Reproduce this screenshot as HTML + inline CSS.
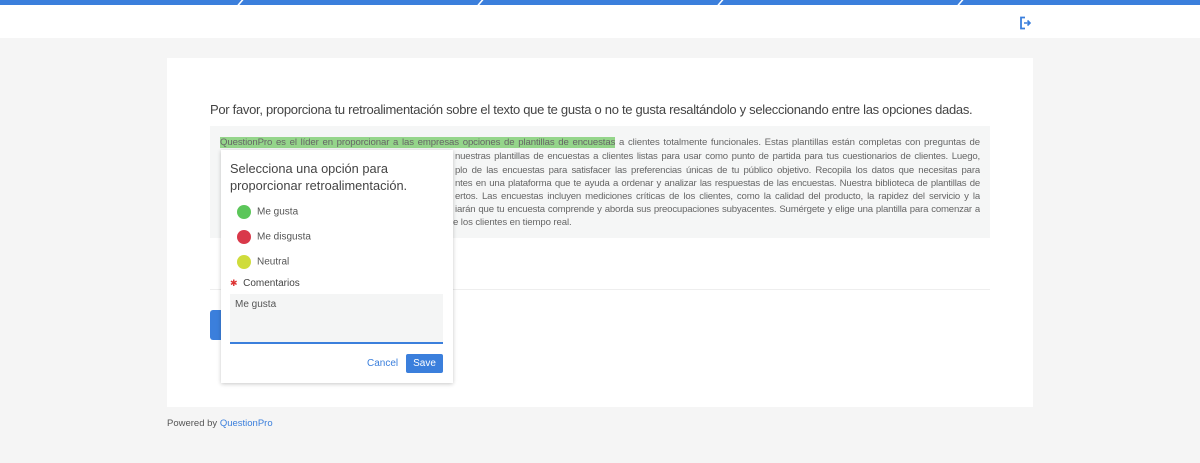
<!DOCTYPE html>
<html><head><meta charset="utf-8"><style>
*{margin:0;padding:0;box-sizing:border-box}
body{width:1200px;height:463px;background:#f5f5f5;font-family:"Liberation Sans",sans-serif;position:relative;overflow:hidden;color:#555}
.top{position:absolute;left:0;top:0;width:1200px;height:5px;background:#3b7fdc}
.sep{position:absolute;top:0;width:2px;height:6px;background:#fff;transform:skewX(-40deg)}
.hdr{position:absolute;left:0;top:5px;width:1200px;height:33px;background:#fff}
.card{position:absolute;left:167px;top:58px;width:866px;height:349px;background:#fff}
.h{position:absolute;left:210px;top:102px;font-size:13px;letter-spacing:-0.3px;color:#444;white-space:nowrap}
.box{position:absolute;left:210px;top:126px;width:780px;height:112px;background:#f5f6f6}
.ln{position:absolute;font-size:9.6px;letter-spacing:-0.1px;color:#666;white-space:nowrap;line-height:13px}
.j{text-align:justify;text-align-last:justify;white-space:normal;height:13px;overflow:hidden}
.t{letter-spacing:-0.18px}
.hl{background:#94d58a}
.pop{position:absolute;left:221px;top:150px;width:232px;height:233px;background:#fff;box-shadow:0 1px 4px rgba(0,0,0,.22)}
.pt{position:absolute;left:9px;top:10px;font-size:12.8px;line-height:17px;color:#444}
.opt{position:absolute;left:16px;font-size:10px;color:#555}
.dot{display:inline-block;width:14px;height:14px;border-radius:50%;vertical-align:middle;margin-right:6px}
.ta{position:absolute;left:9px;top:144px;width:213px;height:50px;background:#f4f5f5;border-bottom:2px solid #3b7fdc;font-size:10px;color:#555;padding:5px}
</style></head><body>
<div class="top"></div>
<div class="sep" style="left:239px"></div><div class="sep" style="left:479px"></div><div class="sep" style="left:719px"></div><div class="sep" style="left:959px"></div>
<div class="hdr"></div>
<svg style="position:absolute;left:1019px;top:16px" width="13" height="14" viewBox="0 0 13 14"><path d="M6 1.5H2v11h4" fill="none" stroke="#3b7fdc" stroke-width="1.8"/><path d="M5 7h6M8.5 4.5L11 7 8.5 9.5" fill="none" stroke="#3b7fdc" stroke-width="1.6"/></svg>
<div class="card"></div>
<div class="h">Por favor, proporciona tu retroalimentación sobre el texto que te gusta o no te gusta resaltándolo y seleccionando entre las opciones dadas.</div>
<div class="box"></div>
<div class="ln j" style="left:220px;top:136px;width:760px"><span class="hl">QuestionPro es el líder en proporcionar a las empresas opciones de plantillas de encuestas</span> a clientes totalmente funcionales. Estas plantillas están completas con preguntas de</div>
<div class="ln j t" style="left:455px;top:150px;width:525px">nuestras plantillas de encuestas a clientes listas para usar como punto de partida para tus cuestionarios de clientes. Luego,</div>
<div class="ln j t" style="left:455px;top:164px;width:525px">plo de las encuestas para satisfacer las preferencias únicas de tu público objetivo. Recopila los datos que necesitas para</div>
<div class="ln j t" style="left:455px;top:177px;width:525px">ntes en una plataforma que te ayuda a ordenar y analizar las respuestas de las encuestas. Nuestra biblioteca de plantillas de</div>
<div class="ln j t" style="left:455px;top:190px;width:525px">ertos. Las encuestas incluyen mediciones críticas de los clientes, como la calidad del producto, la rapidez del servicio y la</div>
<div class="ln j t" style="left:455px;top:203px;width:525px">iarán que tu encuesta comprende y aborda sus preocupaciones subyacentes. Sumérgete y elige una plantilla para comenzar a</div>
<div class="ln" style="left:453px;top:216px">e los clientes en tiempo real.</div>
<div style="position:absolute;left:210px;top:289px;width:780px;height:1px;background:#eee"></div>
<div style="position:absolute;left:210px;top:310px;width:30px;height:30px;background:#3b7fdc;border-radius:3px"></div>
<div class="pop">
<div class="pt">Selecciona una opción para<br>proporcionar retroalimentación.</div>
<div class="opt" style="top:55px"><span class="dot" style="background:#5cc65a"></span>Me gusta</div>
<div class="opt" style="top:80px"><span class="dot" style="background:#d9394a"></span>Me disgusta</div>
<div class="opt" style="top:105px"><span class="dot" style="background:#cfdc3c"></span>Neutral</div>
<div style="position:absolute;left:9px;top:128px;font-size:10px;color:#444"><span style="color:#d33;font-size:9px">✱</span>&nbsp; Comentarios</div>
<div class="ta">Me gusta</div>
<div style="position:absolute;left:146px;top:208px;font-size:10px;color:#3b7fdc">Cancel</div>
<div style="position:absolute;left:185px;top:204px;width:37px;height:19px;background:#3b7fdc;border-radius:2px;color:#fff;font-size:10px;text-align:center;line-height:19px">Save</div>
</div>
<div style="position:absolute;left:167px;top:418px;font-size:9.5px;color:#555">Powered by <span style="color:#3b7fdc">QuestionPro</span></div>
</body></html>
